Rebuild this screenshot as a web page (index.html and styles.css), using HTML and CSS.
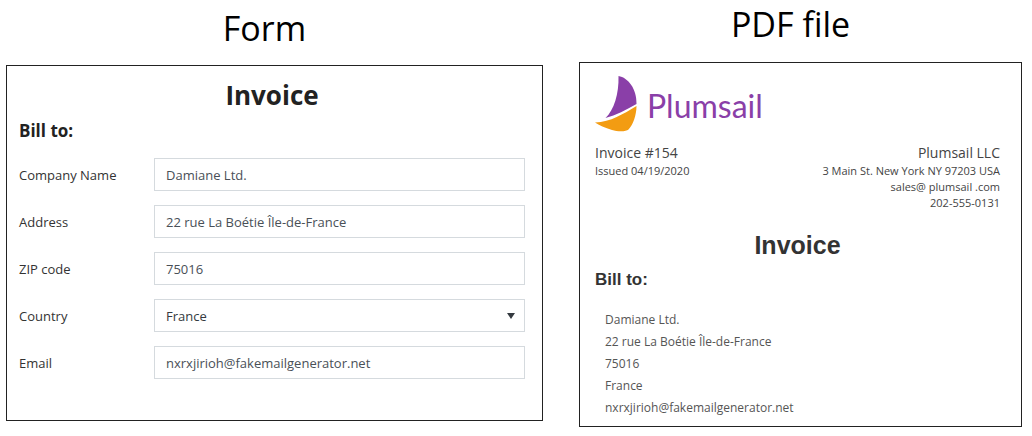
FILE: index.html
```html
<!DOCTYPE html>
<html lang="en">
<head>
<meta charset="utf-8">
<title>Invoice form and PDF file</title>
<link rel="stylesheet" href="styles.css">
</head>
<body>
<main class="compare">
  <section class="side side-form">
    <h1 class="side-title">Form</h1>
    <form class="panel form">
      <h2 class="form-title">Invoice</h2>
      <h3 class="form-subtitle">Bill to:</h3>
      <div class="fields">
        <div class="field">
          <label class="label" for="company">Company Name</label>
          <input class="control" id="company" type="text" value="Damiane Ltd.">
        </div>
        <div class="field">
          <label class="label" for="address">Address</label>
          <input class="control" id="address" type="text" value="22 rue La Boétie Île-de-France">
        </div>
        <div class="field">
          <label class="label" for="zip">ZIP code</label>
          <input class="control" id="zip" type="text" value="75016">
        </div>
        <div class="field">
          <label class="label" for="country">Country</label>
          <div class="select-wrap">
            <select class="control" id="country"><option>France</option></select>
            <svg class="caret" viewBox="0 0 8 6" aria-hidden="true"><path d="M0 0h8L4 6z"/></svg>
          </div>
        </div>
        <div class="field">
          <label class="label" for="email">Email</label>
          <input class="control" id="email" type="email" value="nxrxjirioh@fakemailgenerator.net">
        </div>
      </div>
    </form>
  </section>

  <section class="side side-pdf">
    <h1 class="side-title">PDF file</h1>
    <article class="panel pdf">
      <div class="logo">
        <svg class="logo-mark" viewBox="0 0 42 56" aria-hidden="true">
          <path fill="#8a3fa8" d="M23.500 0C33 1.500 42 13 41.500 28C31 34 21 39 10.500 42C19 34 24 18 23.500 0Z"/>
          <path fill="#f39c12" d="M0 46.500C16 46 28 38 41.500 30C41.500 39 38 49 33.500 53.500C31 56 22 55.500 17 54C10 52 4 49 0 46.500Z"/>
        </svg>
        <span class="logo-text">Plumsail</span>
      </div>
      <div class="parties">
        <div>
          <p class="lead">Invoice #154</p>
          <p class="small">Issued 04/19/2020</p>
        </div>
        <div class="seller">
          <p class="lead">Plumsail LLC</p>
          <p class="small">3 Main St. New York NY 97203 USA</p>
          <p class="small">sales@ plumsail .com</p>
          <p class="small">202-555-0131</p>
        </div>
      </div>
      <h2 class="pdf-title">Invoice</h2>
      <h3 class="pdf-subtitle">Bill to:</h3>
      <address class="buyer">
        <p>Damiane Ltd.</p>
        <p>22 rue La Boétie Île-de-France</p>
        <p>75016</p>
        <p>France</p>
        <p>nxrxjirioh@fakemailgenerator.net</p>
      </address>
    </article>
  </section>
</main>
</body>
</html>
```
FILE: styles.css
```css
* {
  box-sizing: border-box;
}

body,
h1,
h2,
h3,
p {
  margin: 0;
}

body {
  background: #fff;
  color: #333;
  font-family: "Open Sans", "Noto Sans", sans-serif;
  font-size: 13px;
}

.compare {
  display: grid;
  grid-template-columns: 537fr 443fr;
  gap: 36px;
  align-items: start;
  padding: 0 10px 0 6px;
}

.side-title {
  padding-right: 20px;
  color: #000;
  font-size: 34px;
  font-weight: 400;
  line-height: 46px;
  text-align: center;
}

.side-form {
  padding-top: 5px;
}

.side-form .side-title {
  margin-bottom: 14px;
}

.side-pdf .side-title {
  padding-top: 1px;
  margin-bottom: 15px;
}

.panel {
  border: 1px solid #222;
}

.form {
  padding: 10px 17px 41px 12px;
}

.form-title {
  color: #222;
  font-size: 26px;
  line-height: 38px;
  text-align: center;
}

.form-subtitle {
  color: #222;
  font-size: 17px;
  line-height: 34px;
}

.fields {
  display: grid;
  gap: 14px;
  margin-top: 10px;
}

.field {
  display: grid;
  grid-template-columns: 135px 1fr;
  align-items: center;
}

.control {
  width: 100%;
  height: 33px;
  padding: 0 11px;
  border: 1px solid #d5dade;
  border-radius: 0;
  background: #fff;
  color: #495057;
  font: inherit;
}

.select-wrap {
  position: relative;
}

select.control {
  display: block;
  appearance: none;
  color: #343a40;
}

.caret {
  position: absolute;
  top: 14px;
  right: 10px;
  width: 8px;
  height: 6px;
  fill: #343a40;
  pointer-events: none;
}

.pdf {
  padding: 13px 21px 7px 15px;
}

.logo {
  display: flex;
  align-items: center;
  gap: 10px;
}

.logo-mark {
  width: 42px;
  height: 56px;
}

.logo-text {
  padding-top: 4px;
  color: #8a3fa8;
  font-family: Lato, sans-serif;
  font-size: 32px;
  line-height: 38px;
}

.parties {
  display: flex;
  justify-content: space-between;
  margin-top: 11px;
  color: #444;
}

.seller {
  text-align: right;
}

.lead {
  font-size: 14px;
  line-height: 20px;
}

.small {
  font-size: 11px;
  line-height: 16px;
}

.pdf-title,
.pdf-subtitle {
  font-family: "Liberation Sans", Arial, sans-serif;
}

.pdf-title {
  margin-top: 17px;
  font-size: 25px;
  line-height: 34px;
  text-align: center;
}

.pdf-subtitle {
  margin-top: 6px;
  font-size: 17px;
  line-height: 24px;
}

.buyer {
  margin-top: 17px;
  padding-left: 10px;
  color: #555;
  font-size: 12px;
  font-style: normal;
  line-height: 22px;
}
```
